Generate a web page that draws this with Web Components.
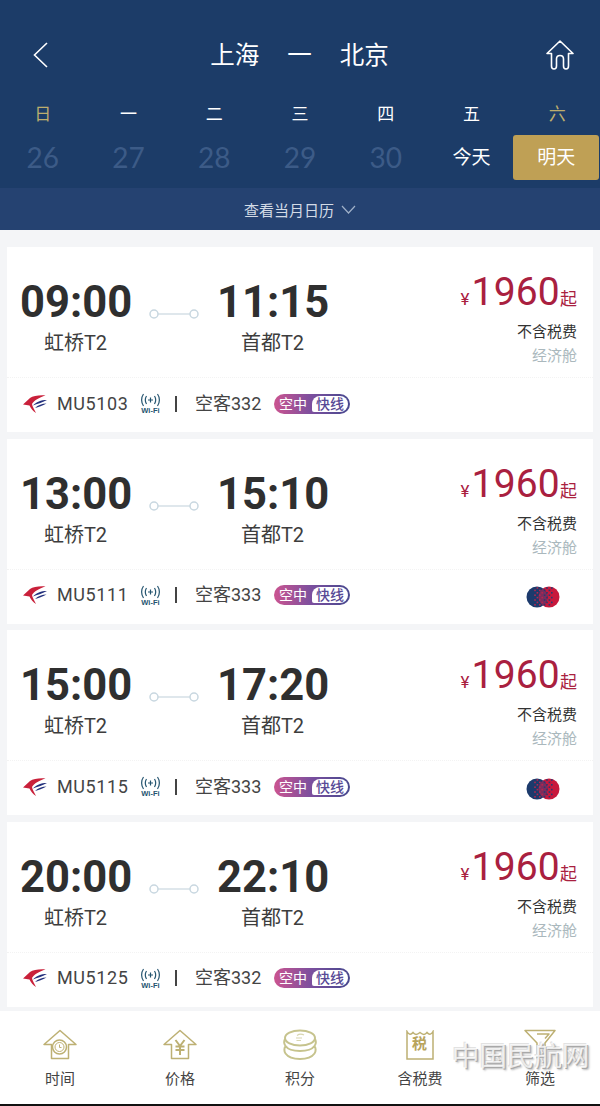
<!DOCTYPE html>
<html lang="zh">
<head>
<meta charset="utf-8">
<title>航班列表</title>
<style>
  html, body { margin: 0; height: 1106px; overflow: hidden; }
  body { background: #f4f5f7; font-family: Roboto, "Noto Sans CJK SC", sans-serif; display: flex; flex-direction: column; }
  flight-list { flex: 1; }
</style>
</head>
<body>
<route-header from="上海" to="北京"></route-header>
<date-strip></date-strip>
<flight-list>
  <flight-card dep="09:00" arr="11:15" no="MU5103" plane="空客332"></flight-card>
  <flight-card dep="13:00" arr="15:10" no="MU5111" plane="空客333" shared></flight-card>
  <flight-card dep="15:00" arr="17:20" no="MU5115" plane="空客333" shared></flight-card>
  <flight-card dep="20:00" arr="22:10" no="MU5125" plane="空客332"></flight-card>
</flight-list>
<tab-bar>
  <bar-item>时间<svg slot="icon" width="36" height="32" viewBox="0 0 36 32"><path d="M9.500 15.500H2L18 1.500L34 15.500H26.500V29.500H9.500Z"/><circle cx="17.500" cy="18" r="7"/><circle cx="17.500" cy="18" r="4.500" stroke-width="1"/><path d="M17.500 15.500V18.500H19.500" stroke-width="1"/></svg></bar-item>
  <bar-item>价格<svg slot="icon" width="36" height="32" viewBox="0 0 36 32"><path d="M9.500 15.500H2L18 1.500L34 15.500H26.500V29.500H9.500Z"/><path d="M13.500 11L18 17L22.500 11M13.500 17.500H22.500M13.500 21H22.500M18 17V26" stroke-width="2"/></svg></bar-item>
  <bar-item>积分<svg slot="icon" width="36" height="33" viewBox="0 0 36 33" style="stroke:#c6c38d;stroke-width:2"><ellipse cx="18" cy="9" rx="15" ry="7.500"/><path d="M3 10C2 12 2 15 3.500 17C6 20.500 12 22 18 22S30 20.500 32.500 17C34 15 34 12 33 10M3.500 17C2 19 2 22.500 3.500 24.500C6 28 12 30 18 30S30 28 32.500 24.500C34 22.500 34 19 32.500 17"/><path d="M15 6.500C17 5 20 5 22 6M14 9H20M14.500 11.500H19" stroke-width="1.200" stroke="#d8d6b0"/></svg></bar-item>
  <bar-item>含税费<tax-icon slot="icon"></tax-icon></bar-item>
  <bar-item>筛选<svg slot="icon" width="36" height="32" viewBox="0 0 36 32"><path d="M3 1.500H33L23 14V24L15 29V14Z"/><path d="M15 5H27L23 9.500" stroke-width="1.500"/></svg></bar-item>
</tab-bar>
<site-mark>中国民航网</site-mark>

<script>
class RouteHeader extends HTMLElement {
    connectedCallback() {
        const root = this.attachShadow({ mode: 'open' });
        root.innerHTML = `
            <style>
                :host { display: block; background: #1c3c68; padding-top: 40px; height: 60px; color: #fff; }
                .bar { display: flex; align-items: center; justify-content: space-between; height: 30px; padding: 0 26px 0 33px; }
                .title { display: flex; gap: 28px; font-size: 24.500px; line-height: 30px; margin: 2px 0 0 5px; }
                svg { fill: none; stroke: #fff; stroke-width: 1.600; display: block; }
            </style>
            <div class="bar">
                <svg width="15" height="26" viewBox="0 0 15 26"><path d="M14 1L1.500 13L14 25"/></svg>
                <div class="title"><span>${this.getAttribute('from')}</span><span>一</span><span>${this.getAttribute('to')}</span></div>
                <svg width="28" height="30" viewBox="0 0 28 30"><path d="M14 1L27 13.500L22.500 13.500V26C22.500 28 21.500 29 20 29C18.500 29 17.500 28 17.500 26V19C17.500 17 16 15.500 14 15.500C12 15.500 10.500 17 10.500 19V26C10.500 28 9.500 29 8 29C6.500 29 5.500 28 5.500 26V13.500L1 13.500Z" stroke-linejoin="round"/></svg>
            </div>`;
    }
}

class DateStrip extends HTMLElement {
    connectedCallback() {
        const days = ['日', '一', '二', '三', '四', '五', '六'];
        const dates = ['26', '27', '28', '29', '30', '今天', '明天'];
        const root = this.attachShadow({ mode: 'open' });
        root.innerHTML = `
            <style>
                :host { display: block; color: #fff; }
                .wrap { background: #1c3c68; height: 88px; }
                .grid { display: grid; grid-template-columns: repeat(7, 1fr); }
                .days { height: 35px; line-height: 28px; font-size: 17px; text-align: center; }
                .gold { color: #bdae6e; }
                .dates { height: 45px; line-height: 45px; text-align: center; }
                .num { font-family: Lato, sans-serif; font-size: 28px; color: #3c5b87; }
                .word { font-size: 19px; }
                .on { background: #bfa055; border-radius: 3px; margin-left: -1px; margin-right: 1px; }
                .more { background: #254271; height: 42px; display: flex; align-items: center; justify-content: center; gap: 7px; font-size: 15px; color: #d3dbe6; }
                svg { fill: none; stroke: #9fb0c8; stroke-width: 1.200; }
            </style>
            <div class="wrap">
                <div class="grid days">${days.map((d, i) => `<span class="${i === 0 || i === 6 ? 'gold' : ''}">${d}</span>`).join('')}</div>
                <div class="grid dates">${dates.map((d, i) => `<span class="${i < 5 ? 'num' : i === 5 ? 'word' : 'word on'}">${d}</span>`).join('')}</div>
            </div>
            <div class="more"><span>查看当月日历</span><svg width="15" height="9" viewBox="0 0 15 9"><path d="M1 1L7.500 8L14 1"/></svg></div>`;
    }
}

class FlightList extends HTMLElement {
    connectedCallback() {
        this.attachShadow({ mode: 'open' }).innerHTML = `
            <style>:host { display: flex; flex-direction: column; gap: 6.670px; padding: 17px 7px 0; }</style>
            <slot></slot>`;
    }
}

class FlightCard extends HTMLElement {
    connectedCallback() {
        const get = name => this.getAttribute(name);
        // checker dots where the two partner circles overlap
        let dots = '';
        for (let y = 2; y < 21; y += 2.4) {
            for (let x = 9; x < 26; x += 2.4) {
                const odd = Math.round((x + y) / 2.4) % 2 === 0;
                const inside = (x - 11) ** 2 + (y - 11) ** 2 < 100 || (x - 23) ** 2 + (y - 11) ** 2 < 100;
                if (odd && inside) dots += `<rect x="${x - 0.8}" y="${y - 0.8}" width="1.600" height="1.600" fill="${x < 17 ? '#b3264e' : '#2a3a72'}"/>`;
            }
        }
        this.attachShadow({ mode: 'open' }).innerHTML = `
            <style>
                :host { display: block; height: 185px; background: #fff; color: #333; }
                .main { display: flex; height: 131px; padding: 0 16px 0 13px; box-sizing: border-box; border-bottom: 1px dotted #f3f3f3; }
                .end { width: 111px; text-align: center; padding-top: 34px; }
                .time { font-size: 43.500px; font-weight: 700; line-height: 44px; color: #2f2f2f; white-space: nowrap; }
                .port { font-size: 20px; line-height: 24px; margin-top: 6px; color: #3d3d3d; }
                .link { width: 86px; padding: 61px 1px 0 0; box-sizing: border-box; display: flex; justify-content: center; }
                .price { margin-left: auto; text-align: right; padding-top: 24px; }
                .fare { display: flex; align-items: baseline; justify-content: flex-end; color: #a9203f; line-height: 42px; height: 42px; }
                .yen { font-size: 17px; margin-right: 2px; }
                .amount { font-size: 39px; letter-spacing: .2px; }
                .from { font-size: 17px; }
                .tax { font-size: 15px; line-height: 20px; margin-top: 9px; }
                .cabin { font-size: 15px; line-height: 20px; margin-top: 4px; color: #aab8bd; }
                .meta { display: flex; align-items: center; height: 51px; padding: 0 33px 0 15px; font-size: 18px; line-height: 24px; color: #444; }
                .no { margin-left: 9px; width: 72px; letter-spacing: .6px; }
                .wifi { margin-left: 11px; width: 21px; display: flex; flex-direction: column; align-items: center; color: #24546f; }
                .wifi b { font-size: 7.500px; line-height: 7px; font-family: "Liberation Sans", sans-serif; white-space: nowrap; }
                .sep { margin-left: 14px; width: 2px; height: 16px; background: #444; }
                .plane { margin-left: 18px; width: 68px; white-space: nowrap; }
                .shared { margin-left: auto; margin-top: 4px; display: block; }
            </style>
            <div class="main">
                <div class="end"><div class="time">${get('dep')}</div><div class="port">虹桥T2</div></div>
                <div class="link">
                    <svg width="52" height="12" viewBox="0 0 52 12"><path d="M8 6H44" stroke="#d4dfe6" stroke-width="1.500"/><circle cx="6" cy="6" r="4" fill="#fff" stroke="#c8d7e0" stroke-width="1.500"/><circle cx="46" cy="6" r="4" fill="#fff" stroke="#c8d7e0" stroke-width="1.500"/></svg>
                </div>
                <div class="end"><div class="time">${get('arr')}</div><div class="port">首都T2</div></div>
                <div class="price">
                    <div class="fare"><span class="yen">¥</span><span class="amount">1960</span><span class="from">起</span></div>
                    <div class="tax">不含税费</div>
                    <div class="cabin">经济舱</div>
                </div>
            </div>
            <div class="meta">
                <svg width="26" height="20" viewBox="0 0 26 20">
                    <path d="M23.500 1.500C17 1 11 2 8 4L1 10.500L7.500 11.500C9 14.500 11 17.500 14 19C12 15 10.500 12.500 10 10C12 6.500 17 3.500 23.500 1.500Z" fill="#c9203a"/>
                    <path d="M25 6C19 6 14 8 11 11.500C15 10 20 8.500 25 6Z" fill="#23307c"/>
                    <path d="M24.500 9.500C20 9.500 16 11 13 14C16.500 13 20.500 11.500 24.500 9.500Z" fill="#23307c"/>
                </svg>
                <span class="no">${get('no')}</span>
                <span class="wifi">
                    <svg width="21" height="14" viewBox="0 0 21 14" fill="none" stroke="currentColor" stroke-width="1.200" style="display:block"><path d="M3.500 1C1 4.500 1 9.500 3.500 13M6.500 3C5 5.500 5 8.500 6.500 11M17.500 1C20 4.500 20 9.500 17.500 13M14.500 3C16 5.500 16 8.500 14.500 11M8 7H13M10.500 4.500V9.500"/></svg>
                    <b>Wi-Fi</b>
                </span>
                <span class="sep"></span>
                <span class="plane">${get('plane')}</span>
                <express-tag></express-tag>
                ${this.hasAttribute('shared') ? `
                <svg class="shared" width="34" height="22" viewBox="0 0 34 22">
                    <circle cx="23" cy="11" r="10.500" fill="#c8183c"/>
                    <circle cx="11" cy="11" r="10.500" fill="#1c3a6c"/>
                    <path d="M17 2.400A10.500 10.500 0 0 1 17 19.600A10.500 10.500 0 0 1 17 2.400Z" fill="#7c2c5c"/>
                    ${dots}
                </svg>` : ''}
            </div>`;
    }
}

class ExpressTag extends HTMLElement {
    connectedCallback() {
        this.attachShadow({ mode: 'open' }).innerHTML = `
            <style>
                :host { display: inline-flex; margin-left: 11px; width: 76px; height: 20px; box-sizing: border-box; border-radius: 10px; overflow: hidden; font-size: 14px; line-height: 20px; flex: none; background: linear-gradient(90deg, #cb5490, #7a4f9e 50%, #47488e); }
                .a { flex: 0 0 38px; text-align: center; color: #fff; }
                .b { flex: 1; margin: 2px 2px 2px 0; border-radius: 8px 8px 8px 2px; line-height: 16px; text-align: center; color: #584a96; background: #fff; white-space: nowrap; font-weight: 500; }
            </style>
            <span class="a">空中</span><span class="b">快线</span>`;
    }
}

class TabBar extends HTMLElement {
    connectedCallback() {
        this.attachShadow({ mode: 'open' }).innerHTML = `
            <style>:host { display: grid; grid-template-columns: repeat(5, 1fr); height: 95px; background: #fff; box-sizing: border-box; border-bottom: 2px solid #111; }</style>
            <slot></slot>`;
    }
}

class BarItem extends HTMLElement {
    connectedCallback() {
        this.attachShadow({ mode: 'open' }).innerHTML = `
            <style>
                :host { display: flex; flex-direction: column; align-items: center; padding-top: 17px; color: #444; font-size: 15px; line-height: 20px; }
                .icon { height: 34px; margin-bottom: 7px; display: flex; align-items: center; }
                ::slotted(svg) { fill: none; stroke: #bdb073; stroke-width: 1.500; stroke-linejoin: round; display: block; }
            </style>
            <div class="icon"><slot name="icon"></slot></div>
            <slot></slot>`;
    }
}

class TaxIcon extends HTMLElement {
    connectedCallback() {
        this.attachShadow({ mode: 'open' }).innerHTML = `
            <style>
                :host { display: block; position: relative; width: 28px; height: 30px; color: #b8a45c; font-size: 15px; font-weight: 700; }
                svg { display: block; fill: none; stroke: #bdb073; stroke-width: 1.500; }
                span { position: absolute; left: 6px; top: 6px; line-height: 17px; }
            </style>
            <svg width="28" height="30" viewBox="0 0 28 30"><path d="M1 1.500C3 5 5 5 7 2.500C9 5 11 5 14 2.500C17 5 19 5 21 2.500C23 5 25 5 27 1.500V29H1Z"/></svg>
            <span>税</span>`;
    }
}

class SiteMark extends HTMLElement {
    connectedCallback() {
        this.attachShadow({ mode: 'open' }).innerHTML = `
            <style>
                :host { position: absolute; left: 452px; top: 1041px; font-size: 27.500px; line-height: 32px; color: rgba(255,255,255,.75); white-space: nowrap; text-shadow: 1px 1px 0 #a8a8a8, 2px 2px 2px #bdbdbd, -1px -1px 0 #e2e2e2; }
            </style>
            <slot></slot>`;
    }
}

customElements.define('route-header', RouteHeader);
customElements.define('date-strip', DateStrip);
customElements.define('flight-list', FlightList);
customElements.define('flight-card', FlightCard);
customElements.define('express-tag', ExpressTag);
customElements.define('tab-bar', TabBar);
customElements.define('bar-item', BarItem);
customElements.define('tax-icon', TaxIcon);
customElements.define('site-mark', SiteMark);
</script>
</body>
</html>
